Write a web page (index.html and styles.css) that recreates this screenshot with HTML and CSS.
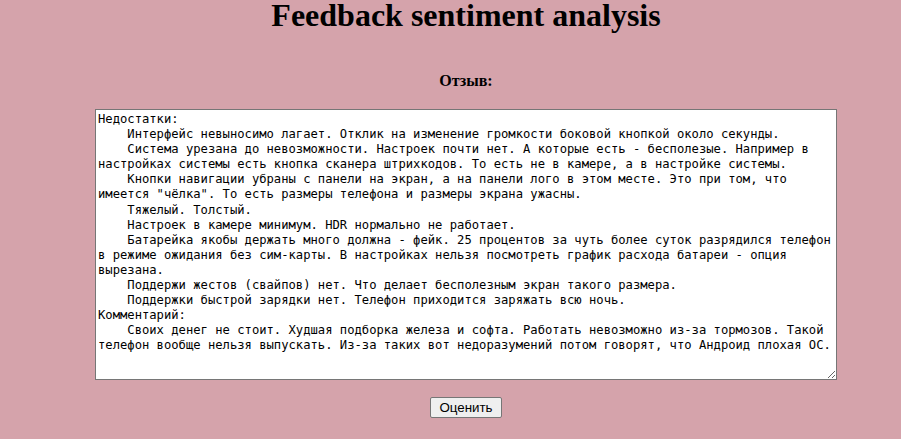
FILE: index.html
```html
<!DOCTYPE html>
<html lang="ru">
<head>
<meta charset="utf-8">
<title>Feedback sentiment analysis</title>
<link rel="stylesheet" href="styles.css">
</head>
<body>
<main class="page">
  <h1 class="title">Feedback sentiment analysis</h1>
  <form class="form">
    <label class="label" for="review">Отзыв:</label>
    <textarea class="review" id="review" spellcheck="false">
Недостатки:
    Интерфейс невыносимо лагает. Отклик на изменение громкости боковой кнопкой около секунды.
    Система урезана до невозможности. Настроек почти нет. А которые есть - бесполезые. Например в
настройках системы есть кнопка сканера штрихкодов. То есть не в камере, а в настройке системы.
    Кнопки навигации убраны с панели на экран, а на панели лого в этом месте. Это при том, что
имеется "чёлка". То есть размеры телефона и размеры экрана ужасны.
    Тяжелый. Толстый.
    Настроек в камере минимум. HDR нормально не работает.
    Батарейка якобы держать много должна - фейк. 25 процентов за чуть более суток разрядился телефон
в режиме ожидания без сим-карты. В настройках нельзя посмотреть график расхода батареи - опция
вырезана.
    Поддержи жестов (свайпов) нет. Что делает бесполезным экран такого размера.
    Поддержки быстрой зарядки нет. Телефон приходится заряжать всю ночь.
Комментарий:
    Своих денег не стоит. Худшая подборка железа и софта. Работать невозможно из-за тормозов. Такой
телефон вообще нельзя выпускать. Из-за таких вот недоразумений потом говорят, что Андроид плохая ОС.</textarea>
    <button class="submit" type="button">Оценить</button>
  </form>
</main>
</body>
</html>
```
FILE: styles.css
```css
html, body {
  margin: 0;
  padding: 0;
}

body {
  background: #d5a3ab;
  font-family: "Liberation Serif", "Times New Roman", serif;
  color: #000;
}

.page {
  display: flex;
  flex-direction: column;
  align-items: center;
  padding-left: 31px;
}

.title {
  margin: 0;
  font-size: 32px;
  line-height: 30px;
  font-weight: bold;
}

.form {
  display: flex;
  flex-direction: column;
  align-items: center;
  margin-top: 42px;
}

.label {
  font-weight: bold;
  font-size: 16px;
  line-height: 18px;
}

.review {
  box-sizing: border-box;
  margin-top: 19px;
  width: 742px;
  height: 271px;
  padding: 2px;
  border: 1px solid #767676;
  background: #fff;
  color: #000;
  font-family: "DejaVu Sans Mono", "Liberation Mono", monospace;
  font-size: 12.18px;
  line-height: 15.1px;
  resize: both;
  outline: none;
}

.submit {
  margin-top: 17px;
  height: 21px;
  padding: 0 8px;
  font-family: "Liberation Sans", Arial, sans-serif;
  font-size: 13.33px;
  color: #000;
  background: #efefef;
  border: 1px solid #767676;
  border-radius: 2px;
}
```
